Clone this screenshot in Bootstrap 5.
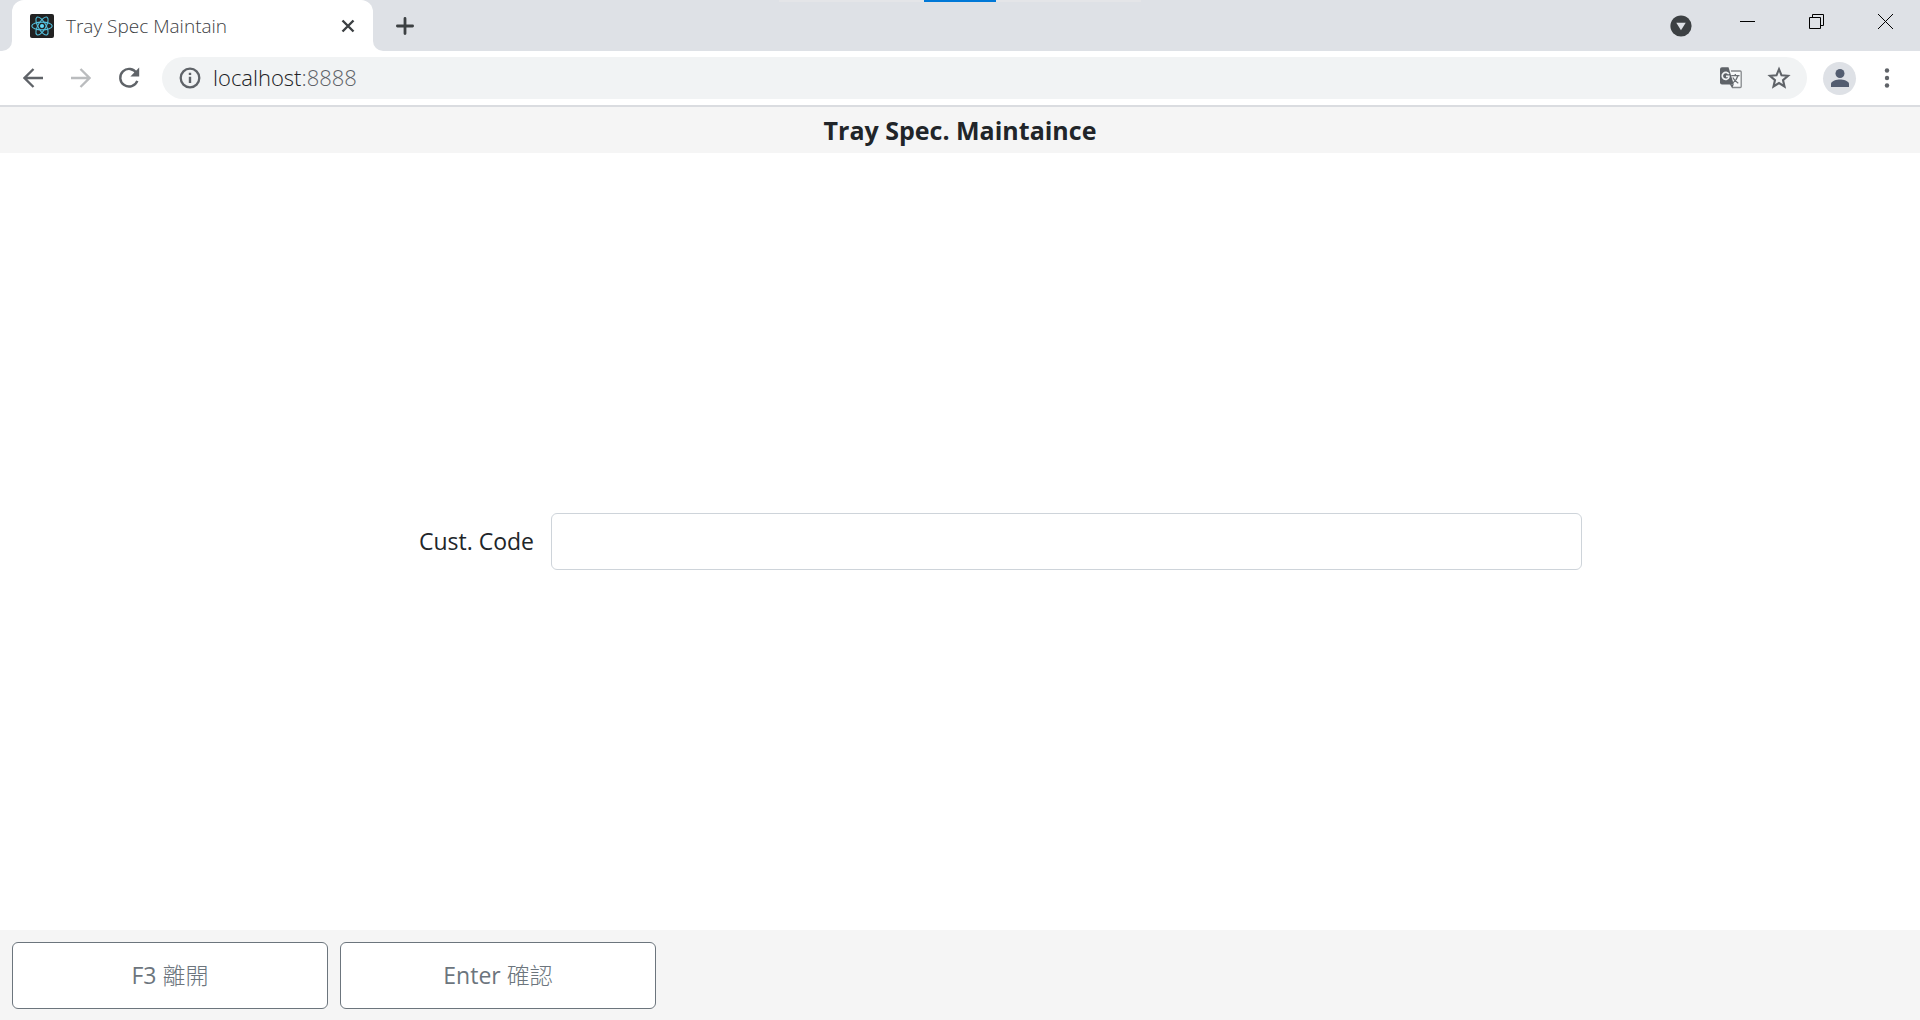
<!DOCTYPE html>
<html lang="zh-Hant">
<head>
<meta charset="utf-8">
<meta name="viewport" content="width=device-width, initial-scale=1">
<title>Tray Spec Maintain</title>
<link rel="stylesheet" href="https://cdn.jsdelivr.net/npm/bootstrap@5.3.0/dist/css/bootstrap.min.css">
<style>
  body { font-family: "Open Sans", "Noto Sans CJK TC", sans-serif; color: #212529; }
  svg { display: block; flex: none; }
  .plain-btn { border: 0; padding: 0; background: none; color: #5f6368; display: flex; align-items: center; justify-content: center; }
  .tab-strip { height: 51px; background: #dee1e6; }
  .strip-edge { width: 12px; background: #dee1e6; border-bottom-right-radius: 10px; }
  .strip-rest { background: #dee1e6; border-bottom-left-radius: 10px; }
  .strip-base { background: #fff; }
  .page-tab { width: 361px; background: #fff; border-radius: 12px 12px 0 0; padding: 0 14px 0 18px; }
  .tab-corner { background: #dee1e6; }
  .tab-title { font-size: 19px; font-weight: 300; color: #3c4043; line-height: 24px; }
  .tab-search { margin-right: 21px; }
  .win-btn { width: 69px; height: 43px; color: #000; }
  .drag-bar { width: 362px; height: 2px; background: #e4e5e8; top: 0; left: 50%; transform: translateX(-50%); }
  .drag-bar span { width: 72px; height: 2px; background: #0078d7; }
  .tool-bar { height: 56px; border-bottom: 2px solid #dadce0; background: #fff; padding: 0 22px 0 9px; }
  .nav-btn { width: 48px; height: 40px; }
  .address-bar { height: 42px; background: #f1f3f4; border-radius: 21px; padding: 0 16px 0 17px; margin-left: 9px; }
  .address-text { font-size: 22px; font-weight: 300; line-height: 30px; color: #202124; padding-bottom: 2px; }
  .address-text span { color: #5f6368; }
  .avatar-disc { width: 33px; height: 33px; border-radius: 50%; background: #dee1e6; color: #535d70; }
  .title-bar { height: 46px; background: #f5f5f5; }
  .title-bar h1 { font-size: 25px; line-height: 46px; font-weight: 700; }
  .entry-form { width: 66%; padding: 0 12px; }
  .entry-label { width: 17.1%; padding-right: 17px; font-size: 23px; }
  .entry-box { height: 57px; font-size: 23px; border-color: #ced4da; border-radius: 6px; }
  .key-bar { background: #f5f5f5; padding: 12px 12px 11px; gap: 12px; }
  .key-btn { width: 316px; height: 67px; background: #fff; font-size: 23px; border-radius: 6px; }
  .key-btn span { font-family: "Noto Sans CJK TC Light", "Noto Sans CJK TC", sans-serif; font-weight: 300; line-height: 1; }
</style>
</head>
<body class="d-flex flex-column vh-100 overflow-hidden bg-white">
<header>
  <div class="tab-strip d-flex position-relative">
    <div class="strip-base d-flex"><div class="strip-edge"></div></div>
    <div class="tab-corner d-flex">
      <div class="page-tab d-flex align-items-center">
        <svg width="24" height="24" viewBox="0 0 24 24"><rect width="24" height="24" rx="2" fill="#222"/><g fill="none" stroke="#53c1de" stroke-width="1.1"><ellipse cx="12" cy="12" rx="10.2" ry="3.9"/><ellipse cx="12" cy="12" rx="10.2" ry="3.9" transform="rotate(60 12 12)"/><ellipse cx="12" cy="12" rx="10.2" ry="3.9" transform="rotate(120 12 12)"/></g><circle cx="12" cy="12" r="2" fill="#61dafb"/></svg>
        <span class="tab-title ms-2 ps-1 me-auto">Tray Spec Maintain</span>
        <button class="plain-btn" type="button" aria-label="Close tab"><svg width="22" height="22" viewBox="0 0 22 22" stroke="#3c4043" stroke-width="2.4"><path d="M5.5 5.5 16.5 16.5M16.5 5.5 5.5 16.5"/></svg></button>
      </div>
    </div>
    <div class="strip-base d-flex flex-grow-1">
      <div class="strip-rest d-flex flex-grow-1">
        <button class="plain-btn ms-3 me-auto px-1" type="button" aria-label="New tab"><svg width="24" height="24" viewBox="0 0 24 24" stroke="#3c4043" stroke-width="2.8" stroke-linecap="round"><path d="M12 4.4V19.6M4.4 12H19.6"/></svg></button>
        <button class="plain-btn tab-search" type="button" aria-label="Search tabs"><svg width="22" height="22" viewBox="0 0 22 22"><circle cx="11" cy="11" r="10.6" fill="#3c4043"/><path d="M6.3 7.7H15.7L11 15.2Z" fill="#dee1e6"/></svg></button>
        <button class="plain-btn win-btn" type="button" aria-label="Minimize"><svg width="15" height="15" viewBox="0 0 15 15"><path d="M0 7.5H15" stroke="#000"/></svg></button>
        <button class="plain-btn win-btn" type="button" aria-label="Restore"><svg width="15" height="15" viewBox="0 0 15 15" fill="none" stroke="#000"><path d="M.5 3.5H11.5V14.5H.5ZM3.5 3.5V.5H14.5V11.5H11.5"/></svg></button>
        <button class="plain-btn win-btn" type="button" aria-label="Close window"><svg width="15" height="15" viewBox="0 0 15 15" stroke="#000"><path d="M0 0 15 15M15 0 0 15"/></svg></button>
      </div>
    </div>
    <div class="drag-bar position-absolute d-flex justify-content-center"><span></span></div>
  </div>
  <div class="tool-bar d-flex align-items-center">
    <button class="plain-btn nav-btn" type="button" aria-label="Back"><svg width="20" height="20" viewBox="0 0 20 20" fill="none" stroke="#5f6368" stroke-width="2.3"><path d="M20 10H2M10.5 1 1.5 10 10.5 19"/></svg></button>
    <button class="plain-btn nav-btn" type="button" aria-label="Forward"><svg width="20" height="20" viewBox="0 0 20 20" fill="none" stroke="#babcbe" stroke-width="2.3"><path d="M0 10H18M9.5 1 18.5 10 9.5 19"/></svg></button>
    <button class="plain-btn nav-btn" type="button" aria-label="Reload"><svg width="22" height="22" viewBox="0 0 22 22"><path d="M18.6 6.2A8.8 8.8 0 1 0 19.3 13.8" fill="none" stroke="#5f6368" stroke-width="2.4"/><path d="M21.2 .6V9.4H12.4Z" fill="#5f6368"/></svg></button>
    <div class="address-bar d-flex align-items-center flex-grow-1">
      <svg width="22" height="22" viewBox="0 0 22 22"><circle cx="11" cy="11" r="9.3" fill="none" stroke="#5f6368" stroke-width="2.3"/><path d="M11 9.8V16M11 5.7V8" stroke="#5f6368" stroke-width="2.4"/></svg>
      <div class="address-text ms-2 ps-1 me-auto">localhost<span>:8888</span></div>
      <button class="plain-btn me-4" type="button" aria-label="Translate"><svg width="24" height="24" viewBox="0 0 24 24"><path d="M12 5H21.2Q22.2 5 22.2 6V20.5Q22.2 21.5 21.2 21.5H13.500L11 17.500" fill="#f8f9fa" stroke="#85888b" stroke-width="1.3"/><path d="M3 1.200H9.500L14.800 18.600H3Q1 18.600 1 16.600V3.200Q1 1.200 3 1.200Z" fill="#5f6368"/><path d="M11.400 18.600H14.800L13.200 21.800Z" fill="#5f6368"/><path d="M9.800 8.200A3.500 3.500 0 1 0 10 11.200M7 10.300H10.700" fill="none" stroke="#f1f3f4" stroke-width="1.700"/><path d="M12.200 9.700H20.500M16.300 8V9.700M18.800 10Q17.500 14.500 13.800 17M13.800 11.500Q15.500 15 19.300 17.300" fill="none" stroke="#6b6f73" stroke-width="1.300"/></svg></button>
      <button class="plain-btn" type="button" aria-label="Bookmark"><svg width="24" height="24" viewBox="0 0 24 24" fill="none" stroke="#5f6368" stroke-width="2.1"><path d="M12 3.200 14.500 9.300 21 9.800 16 14.100 17.500 20.500 12 17.100 6.500 20.500 8 14.100 3 9.800 9.500 9.300Z"/></svg></button>
    </div>
    <button class="plain-btn avatar-disc ms-3" type="button" aria-label="Profile"><svg width="20" height="20" viewBox="0 0 20 20" fill="currentColor"><circle cx="10" cy="5.500" r="4.500"/><path d="M1 19V16C1 13 7 11.600 10 11.600S19 13 19 16V19Z"/></svg></button>
    <button class="plain-btn ms-3 ps-1" type="button" aria-label="Menu"><svg width="22" height="22" viewBox="0 0 22 22" fill="#5f6368"><circle cx="11" cy="3.500" r="2.200"/><circle cx="11" cy="11" r="2.200"/><circle cx="11" cy="18.500" r="2.200"/></svg></button>
  </div>
</header>
<div class="title-bar text-center"><h1 class="m-0">Tray Spec. Maintaince</h1></div>
<main class="flex-grow-1 d-flex align-items-center justify-content-center">
  <form class="entry-form d-flex align-items-center">
    <label class="entry-label flex-shrink-0 text-end text-nowrap" for="custCode">Cust. Code</label>
    <input class="form-control entry-box" id="custCode" type="text">
  </form>
</main>
<footer class="key-bar d-flex">
  <button class="btn btn-outline-secondary key-btn" type="button">F3 <span>離開</span></button>
  <button class="btn btn-outline-secondary key-btn" type="button">Enter <span>確認</span></button>
</footer>
<script src="https://cdn.jsdelivr.net/npm/bootstrap@5.3.0/dist/js/bootstrap.bundle.min.js"></script>
</body>
</html>
